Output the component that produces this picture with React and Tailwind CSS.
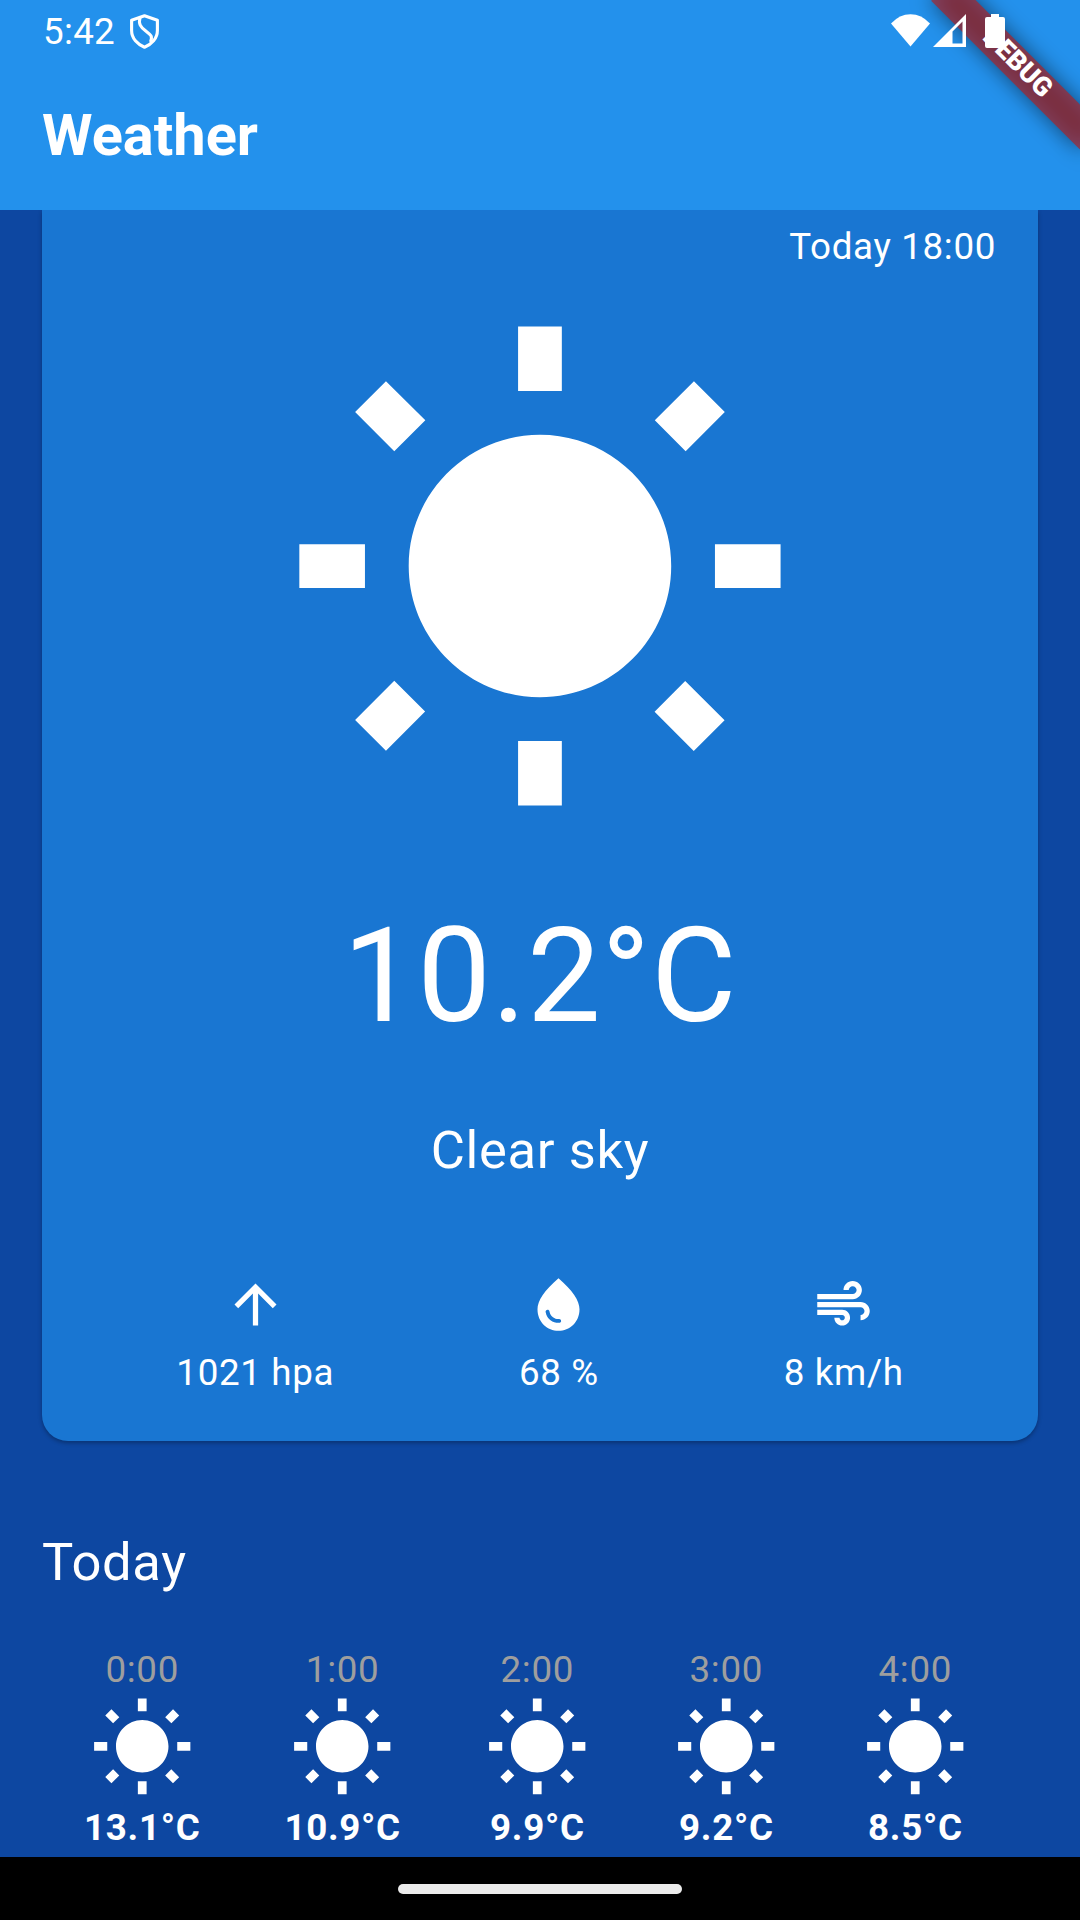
const hours = [
  { time: "0:00", temp: "13.1°C" },
  { time: "1:00", temp: "10.9°C" },
  { time: "2:00", temp: "9.9°C" },
  { time: "3:00", temp: "9.2°C" },
  { time: "4:00", temp: "8.5°C" },
];

function SunIcon({ className, viewBox = "0 0 24 24" }) {
  return (
    <svg viewBox={viewBox} fill="currentColor" className={className}>
      <path d="M6.76 4.84l-1.8-1.79-1.41 1.41 1.79 1.79 1.42-1.41zM4 10.5H1v2h3v-2zm9-9.95h-2V3.5h2V.55zm7.45 3.91l-1.41-1.41-1.79 1.79 1.41 1.41 1.79-1.79zm-3.21 13.7l1.79 1.8 1.41-1.41-1.8-1.79-1.4 1.4zM20 10.5v2h3v-2h-3zm-8-5c-3.31 0-6 2.69-6 6s2.69 6 6 6 6-2.69 6-6-2.69-6-6-6zm-1 16.95h2V19.5h-2v2.95zm-7.45-3.91l1.41 1.41 1.79-1.8-1.41-1.41-1.79 1.8z" />
    </svg>
  );
}

const stats = [
  {
    label: "1021 hpa",
    path: "M4 12l1.41 1.41L11 7.83V20h2V7.83l5.58 5.59L20 12l-8-8-8 8z",
  },
  {
    label: "68 %",
    path: "M12 2c-5.33 4.55-8 8.48-8 11.8 0 4.98 3.8 8.2 8 8.2s8-3.22 8-8.2C20 10.48 17.33 6.55 12 2zm-4.17 12c.37 0 .67.26.74.62.41 2.22 2.28 2.98 3.64 2.87.43-.02.79.32.79.75 0 .4-.32.73-.72.75-2.13.13-4.62-1.09-5.19-4.12-.08-.45.28-.87.74-.87z",
  },
  {
    label: "8 km/h",
    path: "M14.5 17c0 1.65-1.35 3-3 3s-3-1.35-3-3h2c0 .55.45 1 1 1s1-.45 1-1-.45-1-1-1H2v-2h9.5c1.65 0 3 1.35 3 3zM19 6.5C19 4.57 17.43 3 15.5 3S12 4.57 12 6.5h2c0-.83.67-1.5 1.5-1.5s1.5.67 1.5 1.5S16.33 8 15.5 8H2v2h13.5c1.93 0 3.5-1.57 3.5-3.5zm-.5 4.5H2v2h16.5c.83 0 1.5.67 1.5 1.5s-.67 1.5-1.5 1.5v2c1.93 0 3.5-1.57 3.5-3.5S20.43 11 18.5 11z",
  },
];

function DebugBanner() {
  return (
    <div className="pointer-events-none absolute top-0 right-0 h-[210px] w-[300px] overflow-hidden">
      <div className="absolute top-[73.5px] -right-[105px] h-[31.5px] w-[210px] origin-[50%_-73.5px] rotate-45">
        <div className="absolute inset-0 bg-black/50 blur-[10.4px]" />
        <div className="absolute inset-0 flex items-center justify-center bg-[#b71c1c]/63 pb-[2px] text-[26.775px] leading-none font-black">
          DEBUG
        </div>
      </div>
    </div>
  );
}

function StatusBar() {
  return (
    <div className="relative flex h-[63px] items-start justify-between pl-[43px]">
      <div className="flex items-start">
        <span className="pt-[10px] text-[36.75px] leading-[43px] tracking-[0.3px]">5:42</span>
        <svg viewBox="0 0 29 35" className="mt-[14px] ml-[15px] h-[35px] w-[29px]" fill="none" stroke="white" strokeWidth="3.1">
          <path d="M14.5 1.700L27.400 6.200V16.500C27.400 24.500 21.500 30.500 14.500 33.300C7.500 30.500 1.600 24.500 1.600 16.500V6.200Z" strokeLinejoin="round" />
          <path d="M10 3.500C8.300 10 10.500 13 15.500 16.800S23 21.500 20.500 28" />
        </svg>
      </div>
      <div className="flex items-start pt-[14px] pr-[75px]">
        <svg viewBox="0 0 39 33" className="h-[33px] w-[39px]" fill="white">
          <path d="M0 9.500Q8.500 0.200 19.500 0.200T39 9.500L19.500 32.500Z" />
        </svg>
        <svg viewBox="0 0 33 33" className="ml-[3px] h-[33px] w-[33px]" fill="white">
          <path fillRule="evenodd" d="M0 33L33 0V33ZM19.500 17.500V29.500H29.500V7.500Z" />
        </svg>
        <svg viewBox="0 0 20 34" className="ml-[19px] h-[34px] w-[20px]" fill="white">
          <path d="M6 0H14V3H18Q20 3 20 5V32Q20 34 18 34H2Q0 34 0 32V5Q0 3 2 3H6Z" />
        </svg>
      </div>
    </div>
  );
}

export default function App() {
  return (
    <div className="flex h-[1920px] w-[1080px] flex-col overflow-hidden bg-[#0d47a1] font-[Roboto,sans-serif] text-white">
      <header className="relative h-[210px] shrink-0 bg-[#2391ec]">
        <DebugBanner />
        <StatusBar />
        <h1 className="px-[42px] pt-[38px] text-[57.75px] leading-[68px] font-bold">Weather</h1>
      </header>

      <main className="flex h-[1647px] shrink-0 flex-col overflow-hidden px-[42px]">
        <section className="flex h-[1231px] shrink-0 flex-col items-center rounded-b-[26px] bg-[#1976d2] pt-[15px] shadow-[0_2px_4px_rgba(0,0,0,0.3)]">
          <p className="self-end pr-[42px] text-[36.75px] leading-[43px] tracking-[0.656px]">Today 18:00</p>
          <SunIcon viewBox="0.025 -0.02 24 24" className="mt-[46px] h-[525px] w-[525px]" />
          <p className="mt-[60px] text-[131.25px] leading-[154px] tracking-[0.656px]">10.2°C</p>
          <p className="mt-[66px] text-[52.5px] leading-[62px] tracking-[0.656px]">Clear sky</p>
          <div className="mt-[92px] flex w-full justify-around px-[42px]">
            {stats.map((s) => (
              <div key={s.label} className="flex flex-col items-center">
                <svg viewBox="0 0 24 24" fill="currentColor" className="h-[63px] w-[63px]">
                  <path d={s.path} />
                </svg>
                <span className="mt-[15px] text-[36.75px] leading-[43px] tracking-[0.656px]">{s.label}</span>
              </div>
            ))}
          </div>
        </section>

        <h2 className="mt-[90px] text-[52.5px] leading-[62px] tracking-[0.656px]">Today</h2>
        <div className="mt-[55px] flex gap-[84px] px-[42px]">
          {hours.map((h) => (
            <div key={h.time} className="flex flex-col items-center">
              <span className="text-[36.75px] leading-[43px] tracking-[0.7px] text-[#9e9e9e]">{h.time}</span>
              <SunIcon viewBox="0.06 0 24 24" className="mt-[5px] h-[105px] w-[105px]" />
              <span className="mt-[5px] text-[36.75px] leading-[43px] font-bold tracking-[0.69px]">{h.temp}</span>
            </div>
          ))}
        </div>
      </main>

      <nav className="flex h-[63px] shrink-0 justify-center bg-black pt-[27px]">
        <div className="h-[10px] w-[284px] rounded-full bg-[#ebebeb]" />
      </nav>
    </div>
  );
}
